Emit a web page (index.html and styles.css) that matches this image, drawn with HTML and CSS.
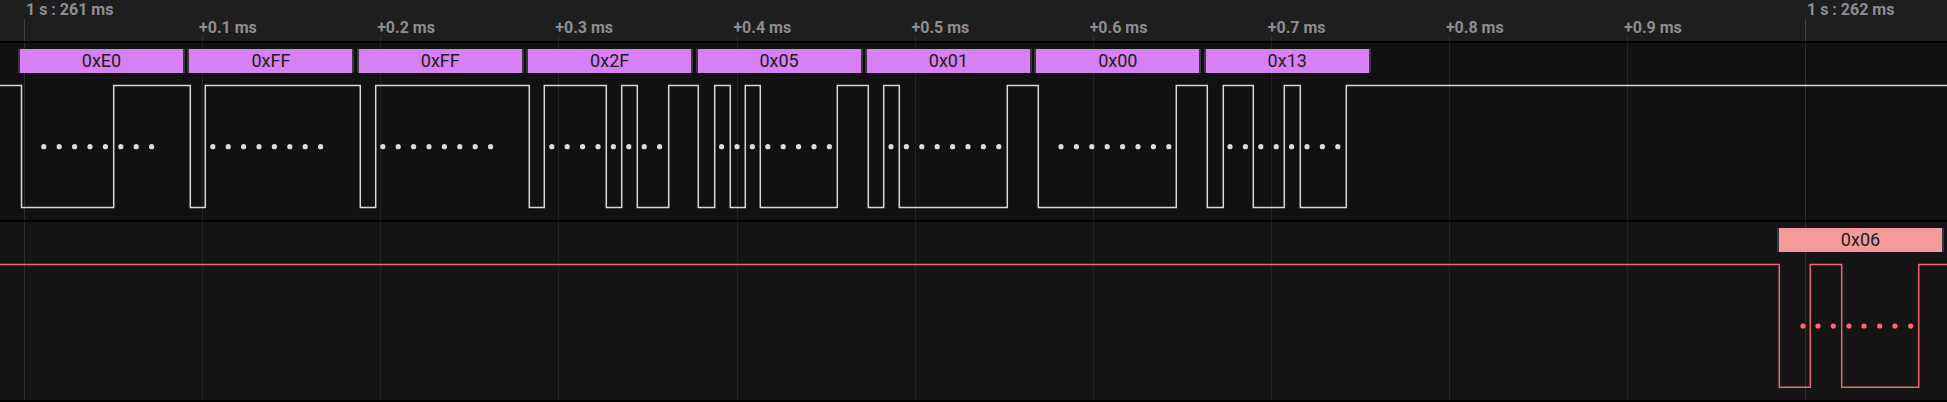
FILE: index.html
```html
<!DOCTYPE html>
<html>
<head>
<meta charset="utf-8">
<link rel="stylesheet" href="styles.css">
</head>
<body>
<div class="scope">
  <header class="ruler">
    <svg class="ruler-lines" width="1947" height="41" viewBox="0 0 1947 41">
      <line class="major-line" x1="24.5" y1="19" x2="24.5" y2="41"/>
      <line class="major-line" x1="1805.5" y1="19" x2="1805.5" y2="41"/>
      <line class="minor-line" x1="202.5" y1="37" x2="202.5" y2="41"/>
      <line class="minor-line" x1="380.5" y1="37" x2="380.5" y2="41"/>
      <line class="minor-line" x1="558.5" y1="37" x2="558.5" y2="41"/>
      <line class="minor-line" x1="737.5" y1="37" x2="737.5" y2="41"/>
      <line class="minor-line" x1="915.5" y1="37" x2="915.5" y2="41"/>
      <line class="minor-line" x1="1093.5" y1="37" x2="1093.5" y2="41"/>
      <line class="minor-line" x1="1271.5" y1="37" x2="1271.5" y2="41"/>
      <line class="minor-line" x1="1449.5" y1="37" x2="1449.5" y2="41"/>
      <line class="minor-line" x1="1627.5" y1="37" x2="1627.5" y2="41"/>
    </svg>
    <div class="majors">
      <span class="major">1 s : 261 ms</span>
      <span class="major">1 s : 262 ms</span>
    </div>
    <div class="minors">
      <span class="minor">+0.1 ms</span>
      <span class="minor">+0.2 ms</span>
      <span class="minor">+0.3 ms</span>
      <span class="minor">+0.4 ms</span>
      <span class="minor">+0.5 ms</span>
      <span class="minor">+0.6 ms</span>
      <span class="minor">+0.7 ms</span>
      <span class="minor">+0.8 ms</span>
      <span class="minor">+0.9 ms</span>
    </div>
  </header>

  <section class="channel ch1">
    <svg class="wave" width="1947" height="177" viewBox="0 0 1947 177">
      <g class="grid">
        <line class="g-major" x1="24.5" y1="0" x2="24.5" y2="177"/>
        <line x1="202.5" y1="0" x2="202.5" y2="177"/>
        <line x1="380.5" y1="0" x2="380.5" y2="177"/>
        <line x1="558.5" y1="0" x2="558.5" y2="177"/>
        <line x1="737.5" y1="0" x2="737.5" y2="177"/>
        <line x1="915.5" y1="0" x2="915.5" y2="177"/>
        <line x1="1093.5" y1="0" x2="1093.5" y2="177"/>
        <line x1="1271.5" y1="0" x2="1271.5" y2="177"/>
        <line x1="1449.5" y1="0" x2="1449.5" y2="177"/>
        <line x1="1627.5" y1="0" x2="1627.5" y2="177"/>
        <line class="g-major" x1="1805.5" y1="0" x2="1805.5" y2="177"/>
      </g>
      <path class="trace" d="M0 42.5 H21.5 V164.5 H113.7 V42.5 H190.3 V164.5 H205.3 V42.5 H360.3 V164.5 H375.7 V42.5 H529.3 V164.5 H544.3 V42.5 H606.3 V164.5 H621.7 V42.5 H637.3 V164.5 H668.7 V42.5 H698.3 V164.5 H714.7 V42.5 H730.3 V164.5 H745.3 V42.5 H760.3 V164.5 H837.3 V42.5 H868.3 V164.5 H883.7 V42.5 H899.3 V164.5 H1007.3 V42.5 H1038.3 V164.5 H1176.3 V42.5 H1207.3 V164.5 H1223.3 V42.5 H1253.3 V164.5 H1284.3 V42.5 H1300.3 V164.5 H1346.3 V42.5 H1947"/>
      <g class="samples">
        <circle cx="43.8" cy="103.7" r="2.6"/><circle cx="59.2" cy="103.7" r="2.6"/><circle cx="74.6" cy="103.7" r="2.6"/><circle cx="90" cy="103.7" r="2.6"/><circle cx="105.4" cy="103.7" r="2.6"/><circle cx="120.8" cy="103.7" r="2.6"/><circle cx="136.2" cy="103.7" r="2.6"/><circle cx="151.6" cy="103.7" r="2.6"/>
        <circle cx="212.8" cy="103.7" r="2.6"/><circle cx="228.2" cy="103.7" r="2.6"/><circle cx="243.6" cy="103.7" r="2.6"/><circle cx="259" cy="103.7" r="2.6"/><circle cx="274.4" cy="103.7" r="2.6"/><circle cx="289.8" cy="103.7" r="2.6"/><circle cx="305.2" cy="103.7" r="2.6"/><circle cx="320.6" cy="103.7" r="2.6"/>
        <circle cx="382.8" cy="103.7" r="2.6"/><circle cx="398.2" cy="103.7" r="2.6"/><circle cx="413.6" cy="103.7" r="2.6"/><circle cx="429" cy="103.7" r="2.6"/><circle cx="444.4" cy="103.7" r="2.6"/><circle cx="459.8" cy="103.7" r="2.6"/><circle cx="475.2" cy="103.7" r="2.6"/><circle cx="490.6" cy="103.7" r="2.6"/>
        <circle cx="551.8" cy="103.7" r="2.6"/><circle cx="567.2" cy="103.7" r="2.6"/><circle cx="582.6" cy="103.7" r="2.6"/><circle cx="598" cy="103.7" r="2.6"/><circle cx="613.4" cy="103.7" r="2.6"/><circle cx="628.8" cy="103.7" r="2.6"/><circle cx="644.2" cy="103.7" r="2.6"/><circle cx="659.6" cy="103.7" r="2.6"/>
        <circle cx="721.6" cy="103.7" r="2.6"/><circle cx="737" cy="103.7" r="2.6"/><circle cx="752.4" cy="103.7" r="2.6"/><circle cx="767.8" cy="103.7" r="2.6"/><circle cx="783.2" cy="103.7" r="2.6"/><circle cx="798.6" cy="103.7" r="2.6"/><circle cx="814" cy="103.7" r="2.6"/><circle cx="829.4" cy="103.7" r="2.6"/>
        <circle cx="891" cy="103.7" r="2.6"/><circle cx="906.4" cy="103.7" r="2.6"/><circle cx="921.8" cy="103.7" r="2.6"/><circle cx="937.2" cy="103.7" r="2.6"/><circle cx="952.6" cy="103.7" r="2.6"/><circle cx="968" cy="103.7" r="2.6"/><circle cx="983.4" cy="103.7" r="2.6"/><circle cx="998.8" cy="103.7" r="2.6"/>
        <circle cx="1061" cy="103.7" r="2.6"/><circle cx="1076.4" cy="103.7" r="2.6"/><circle cx="1091.8" cy="103.7" r="2.6"/><circle cx="1107.2" cy="103.7" r="2.6"/><circle cx="1122.6" cy="103.7" r="2.6"/><circle cx="1138" cy="103.7" r="2.6"/><circle cx="1153.4" cy="103.7" r="2.6"/><circle cx="1168.8" cy="103.7" r="2.6"/>
        <circle cx="1230" cy="103.7" r="2.6"/><circle cx="1245.4" cy="103.7" r="2.6"/><circle cx="1260.8" cy="103.7" r="2.6"/><circle cx="1276.2" cy="103.7" r="2.6"/><circle cx="1291.6" cy="103.7" r="2.6"/><circle cx="1307" cy="103.7" r="2.6"/><circle cx="1322.4" cy="103.7" r="2.6"/><circle cx="1337.8" cy="103.7" r="2.6"/>
      </g>
    </svg>
    <div class="frames">
      <div class="frame">0xE0</div>
      <div class="frame">0xFF</div>
      <div class="frame">0xFF</div>
      <div class="frame">0x2F</div>
      <div class="frame">0x05</div>
      <div class="frame">0x01</div>
      <div class="frame">0x00</div>
      <div class="frame">0x13</div>
    </div>
  </section>

  <section class="channel ch2">
    <svg class="wave" width="1947" height="178" viewBox="0 0 1947 178">
      <g class="grid">
        <line class="g-major" x1="24.5" y1="0" x2="24.5" y2="178"/>
        <line x1="202.5" y1="0" x2="202.5" y2="178"/>
        <line x1="380.5" y1="0" x2="380.5" y2="178"/>
        <line x1="558.5" y1="0" x2="558.5" y2="178"/>
        <line x1="737.5" y1="0" x2="737.5" y2="178"/>
        <line x1="915.5" y1="0" x2="915.5" y2="178"/>
        <line x1="1093.5" y1="0" x2="1093.5" y2="178"/>
        <line x1="1271.5" y1="0" x2="1271.5" y2="178"/>
        <line x1="1449.5" y1="0" x2="1449.5" y2="178"/>
        <line x1="1627.5" y1="0" x2="1627.5" y2="178"/>
        <line class="g-major" x1="1805.5" y1="0" x2="1805.5" y2="178"/>
      </g>
      <path class="trace" d="M0 42.5 H1779.3 V165.3 H1810.3 V42.5 H1841.7 V165.3 H1918.7 V42.5 H1947"/>
      <g class="samples">
        <circle cx="1803" cy="104" r="2.6"/><circle cx="1818" cy="104" r="2.6"/><circle cx="1833.3" cy="104" r="2.6"/><circle cx="1849" cy="104" r="2.6"/><circle cx="1864" cy="104" r="2.6"/><circle cx="1879.7" cy="104" r="2.6"/><circle cx="1895" cy="104" r="2.6"/><circle cx="1910.7" cy="104" r="2.6"/>
      </g>
    </svg>
    <div class="frames">
      <div class="frame">0x06</div>
    </div>
  </section>
</div>
</body>
</html>
```

FILE: styles.css
```css
html, body {
  margin: 0;
  padding: 0;
  background: #000;
}

body {
  width: 1947px;
  height: 402px;
  overflow: hidden;
  font-family: Roboto, "Liberation Sans", sans-serif;
}

.scope {
  width: 1947px;
  height: 400px;
  background: #000;
  border-bottom: 2px solid #000;
}

.ruler {
  position: relative;
  height: 41px;
  background: #1e1e1e;
  overflow: hidden;
}

.ruler-lines {
  position: absolute;
  left: 0;
  top: 0;
}

.major-line {
  stroke: #444446;
  stroke-width: 1;
}

.minor-line {
  stroke: #3a3a3c;
  stroke-width: 1;
}

.majors {
  display: grid;
  grid-template-columns: 1781px auto;
  height: 19px;
  padding-left: 26px;
}

.major,
.minor {
  font-size: 16px;
  font-weight: 700;
  color: #8e8e92;
  white-space: nowrap;
}

.major {
  line-height: 19px;
}

.minors {
  display: flex;
  padding-left: 199px;
  height: 22px;
}

.minor {
  flex: none;
  width: 178.13px;
  line-height: 18px;
}

.channel {
  position: relative;
  margin-top: 2px;
  overflow: hidden;
}

.ch1 {
  height: 177px;
  background: #111111;
}

.ch2 {
  height: 178px;
  background: #151515;
}

.wave {
  position: absolute;
  left: 0;
  top: 0;
}

.grid line {
  stroke: #232323;
  stroke-width: 1;
}

.grid line.g-major {
  stroke: #2e2e2e;
}

.trace {
  fill: none;
  stroke-width: 1.5;
}

.ch1 .trace {
  stroke: #d8d8d8;
}

.ch2 .trace {
  stroke: #ef6473;
}

.ch1 .samples circle {
  fill: #dcdcdc;
}

.ch2 .samples circle {
  fill: #ff6676;
}

.frames {
  position: relative;
  display: flex;
  gap: 2.4px;
  padding: 6px 0 0 18px;
}

.ch2 .frames {
  justify-content: flex-end;
  padding: 6px 3px 0 0;
}

.frame {
  box-sizing: border-box;
  flex: none;
  width: 167px;
  height: 24px;
  border-left: 2px solid #38383a;
  border-right: 2px solid #38383a;
  font-size: 18px;
  line-height: 24px;
  text-align: center;
  color: #1c1c1c;
}

.ch1 .frame {
  background: #d780f3;
}

.ch2 .frame {
  background: #f59a9b;
}
```
